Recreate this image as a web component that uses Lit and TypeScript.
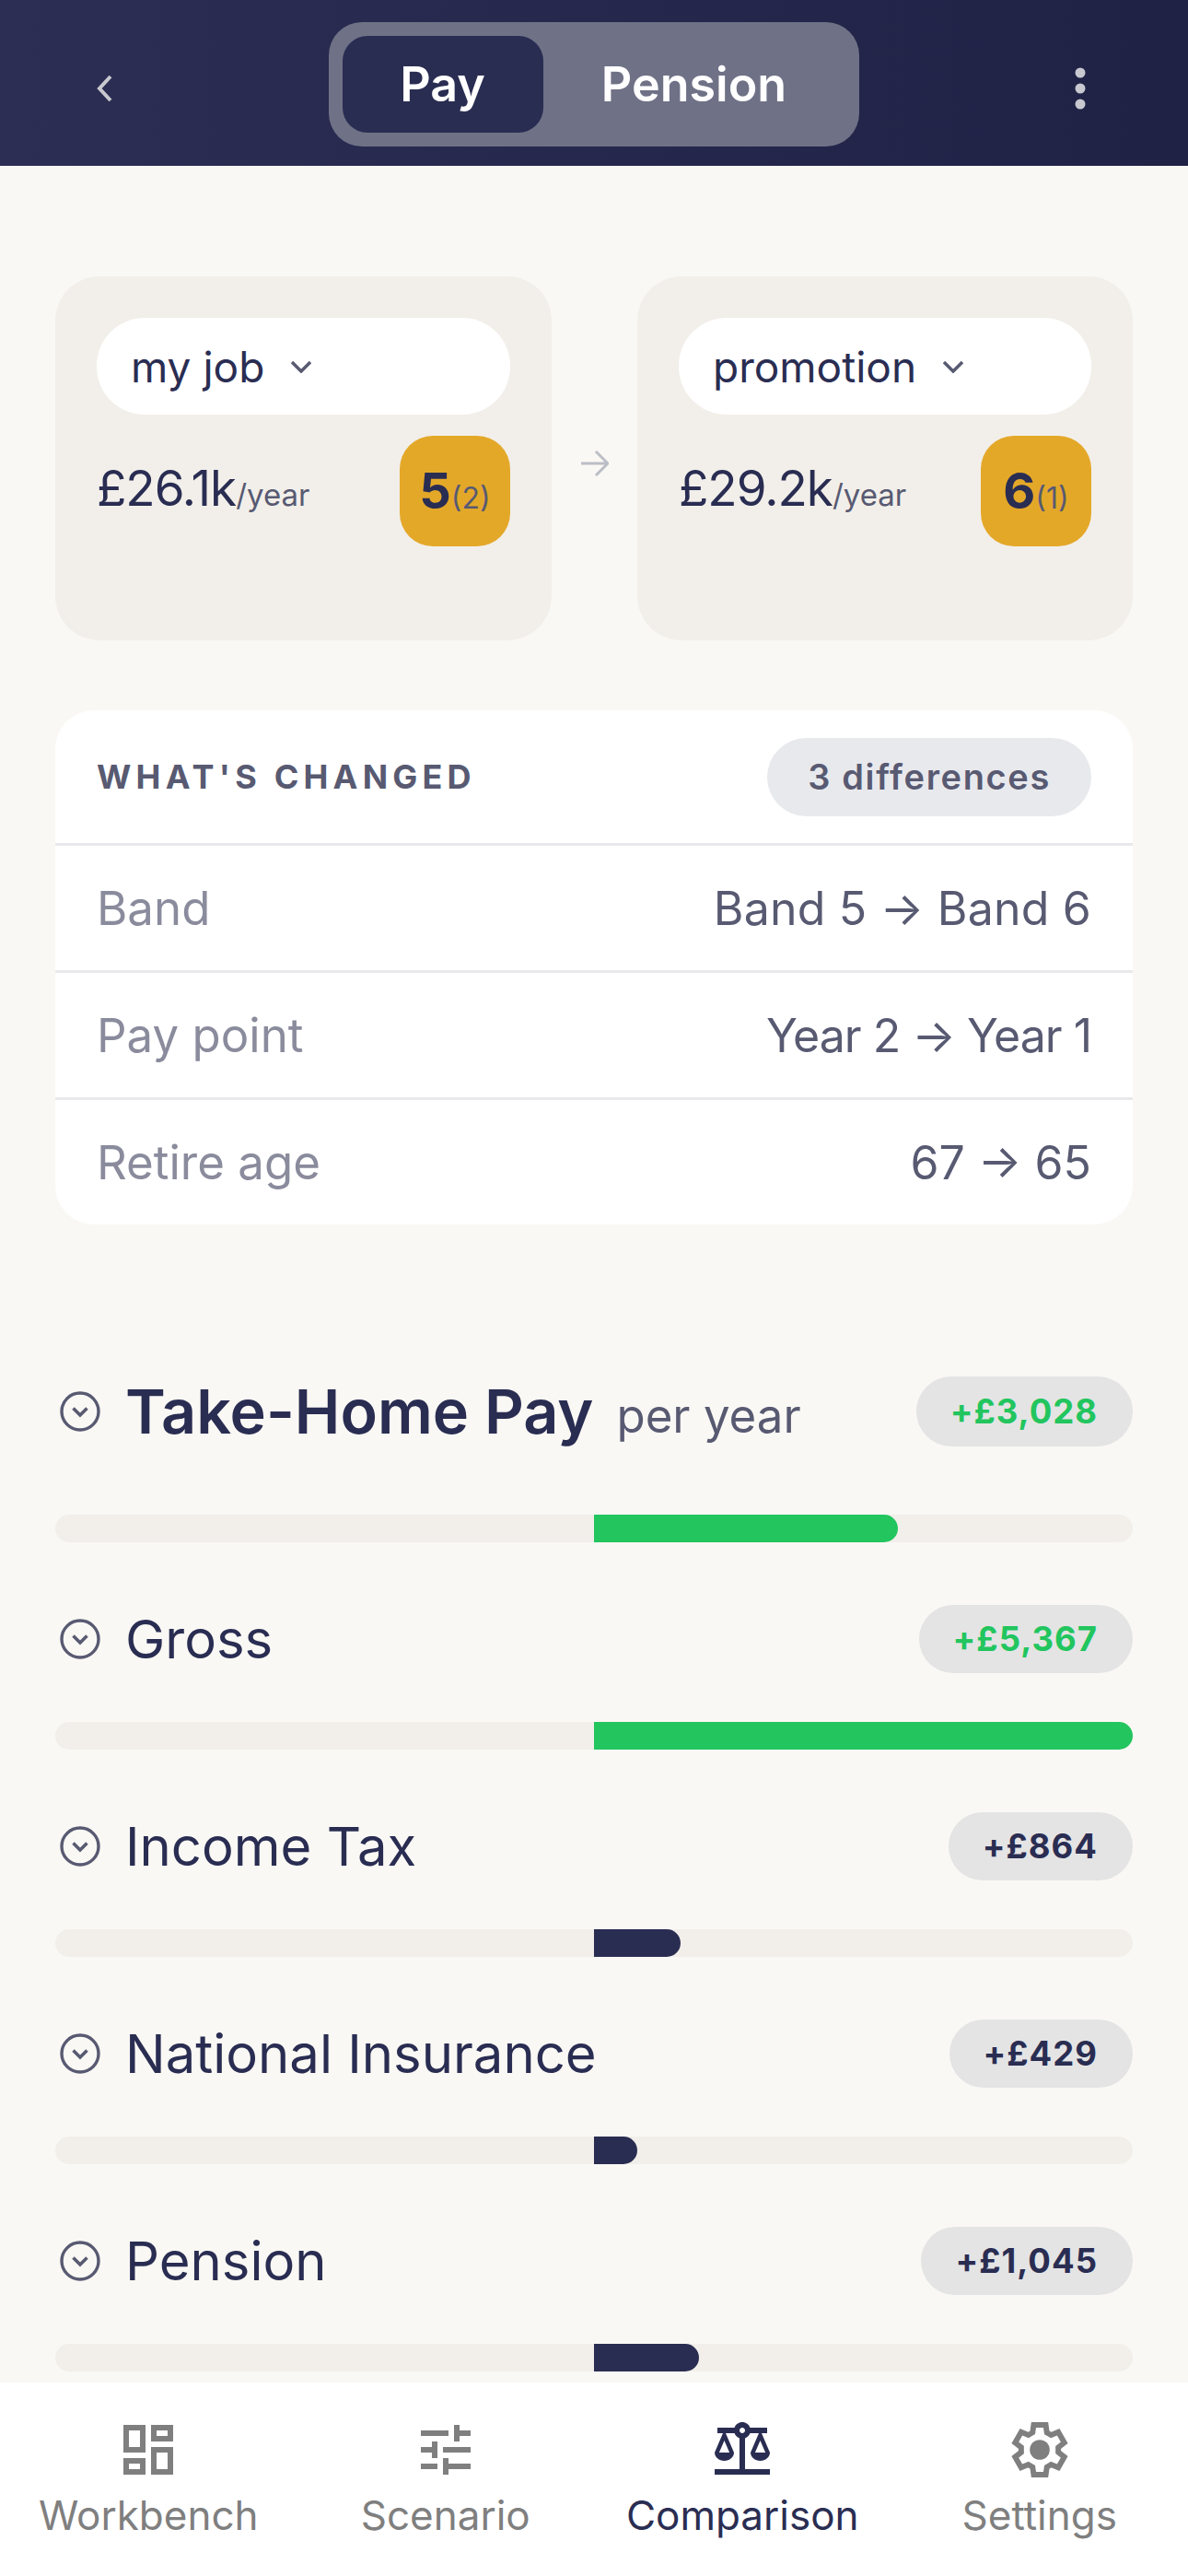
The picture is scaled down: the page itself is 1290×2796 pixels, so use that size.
import { LitElement, html, css, svg } from "lit";
import { customElement } from "lit/decorators.js";

const chevronCircle = html`<svg class="toggle" viewBox="0 0 44 44" fill="none" stroke="#585a72" stroke-width="3.4">
  <circle cx="22" cy="22" r="20"></circle>
  <path d="M14.500 18.500l7.500 7.500 7.500-7.500" stroke-width="3.6"></path>
</svg>`;

const workbench = svg`<path d="M19 5v2h-4V5h4M9 5v6H5V5h4m10 8v6h-4v-6h4M9 17v2H5v-2h4M21 3h-8v6h8V3zM11 3H3v10h8V3zm10 8h-8v10h8V11zm-10 4H3v6h8v-6z"/>`;
const sliders = svg`<path d="M3 17v2h6v-2H3zM3 5v2h10V5H3zm10 16v-2h8v-2h-8v-2h-2v6h2zM7 9v2H3v2h4v2h2V9H7zm14 4v-2H11v2h10zm-6-4h2V7h4V5h-4V3h-2v6z"/>`;
const scales = svg`<path d="M13 7.830c.85-.3 1.530-.98 1.830-1.830H18l-3 7c0 1.660 1.570 3 3.500 3s3.500-1.340 3.500-3l-3-7h2V4h-6.170c-.41-1.170-1.520-2-2.830-2s-2.420.83-2.830 2H3v2h2l-3 7c0 1.660 1.570 3 3.500 3S9 14.660 9 13L6 6h3.170c.3.850.98 1.530 1.830 1.830V19H2v2h20v-2h-9V7.830zM20.370 13h-3.740l1.870-4.360L20.370 13zm-13 0H3.630L5.500 8.640 7.370 13zM12 6c-.55 0-1-.45-1-1 0-.55.45-1 1-1s1 .45 1 1c0 .55-.45 1-1 1z"/>`;
const gear = svg`<polygon fill="none" stroke="currentColor" stroke-width="2.2" transform="translate(12 12) scale(.9) translate(-12 -12)"
    points="9.570,2 14.430,2 14.870,5.070 16.600,6.060 19.470,4.900 21.890,9.120 19.450,11.040 19.450,12.990 21.890,14.900 19.460,19.100 16.580,17.950 14.870,18.950 14.430,22 9.570,22 9.130,18.950 7.400,17.950 4.520,19.100 2.090,14.900 4.550,12.990 4.550,11.010 2.110,9.120 4.550,4.900 7.430,6.070 9.130,5.070"></polygon>
  <circle cx="12" cy="12" r="3.600"></circle>`;

const rows = [
  { name: "Gross", delta: "+£5,367", width: 585, color: "#22c55e" },
  { name: "Income Tax", delta: "+£864", width: 94, color: "#2a2d52" },
  { name: "National Insurance", delta: "+£429", width: 47, color: "#2a2d52" },
  { name: "Pension", delta: "+£1,045", width: 114, color: "#2a2d52" },
];

const changes = [
  { key: "Band", value: "Band 5 → Band 6", spacing: 0.2 },
  { key: "Pay point", value: "Year 2 → Year 1", spacing: -1 },
  { key: "Retire age", value: "67 → 65", spacing: 0 },
];

const navItems = [
  { label: "Workbench", icon: workbench, active: false },
  { label: "Scenario", icon: sliders, active: false },
  { label: "Comparison", icon: scales, active: true },
  { label: "Settings", icon: gear, active: false },
];

@customElement("app-root")
export class AppRoot extends LitElement {
  static styles = css`
    :host {
      display: block;
      width: 1290px;
      height: 2796px;
      font-family: Inter, "Noto Sans", sans-serif;
      color: #2a2d52;
      background: #faf8f4;
      overflow: hidden;
    }
    .screen {
      height: 2796px;
      display: flex;
      flex-direction: column;
    }
    header {
      flex: none;
      height: 180px;
      box-sizing: border-box;
      display: flex;
      align-items: center;
      justify-content: space-between;
      padding: 0 110px 0 103px;
      background: linear-gradient(90deg, #2c2e54, #1f2145);
    }
    .back { width: 20px; height: 34px; margin-top: 12px; }
    .more { width: 14px; height: 46px; margin-top: 12px; }
    .tabs {
      display: flex;
      width: 576px;
      height: 135px;
      margin-top: 3px;
      padding: 15px;
      box-sizing: border-box;
      border-radius: 36px;
      background: #6f7186;
      color: #fff;
      font-weight: 600;
      font-size: 52px;
    }
    .tabs span {
      display: flex;
      align-items: center;
      justify-content: center;
    }
    .tabs .on {
      width: 218px;
      background: #2a2d52;
      border-radius: 27px;
    }
    .tabs .off { width: 328px; }
    main {
      flex: 1;
      min-height: 0;
      overflow: hidden;
      padding: 120px 60px 0;
    }
    .compare {
      display: grid;
      grid-template-columns: 539px 1fr 538px;
      align-items: start;
    }
    .job {
      height: 395px;
      box-sizing: border-box;
      padding: 45px;
      background: #f2efea;
      border-radius: 48px;
    }
    .select {
      height: 105px;
      display: flex;
      align-items: center;
      gap: 28px;
      padding-left: 37px;
      background: #fff;
      border-radius: 52px;
      font-size: 46px;
    }
    .select svg { width: 24px; height: 14px; }
    .figures {
      display: flex;
      align-items: center;
      justify-content: space-between;
      margin-top: 23px;
    }
    .amount { font-size: 53px; letter-spacing: -1px; margin-top: -6px; }
    .amount small { font-size: 33px; color: #585a72; letter-spacing: 0; }
    .band {
      width: 120px;
      height: 120px;
      display: flex;
      align-items: baseline;
      justify-content: center;
      padding-top: 27px;
      box-sizing: border-box;
      background: #e4a829;
      border-radius: 36px;
      font-weight: 700;
      font-size: 54px;
    }
    .band small { font-weight: 400; font-size: 32px; color: #585a72; }
    .arrow {
      justify-self: center;
      width: 30px;
      height: 30px;
      margin-top: 188px;
    }
    .changes {
      margin-top: 76px;
      background: #fff;
      border-radius: 42px;
      overflow: hidden;
    }
    .changes-head {
      height: 144px;
      display: flex;
      align-items: center;
      justify-content: space-between;
      padding: 0 45px;
    }
    .changes-head b {
      font-weight: 700;
      font-size: 36px;
      letter-spacing: 5.200px;
      color: #585a72;
    }
    .count {
      height: 85px;
      display: flex;
      align-items: center;
      padding: 0 44px;
      background: #e8e9ed;
      border-radius: 43px;
      font-weight: 600;
      font-size: 38px;
      letter-spacing: 1.650px;
      color: #585a72;
    }
    .change {
      height: 138px;
      box-sizing: border-box;
      display: flex;
      align-items: center;
      justify-content: space-between;
      padding: 0 45px;
      border-top: 3px solid #e9e9ec;
      font-size: 50px;
      color: #585a72;
    }
    .change .key { color: #8a8b9c; font-size: 51px; }
    .lines { padding-top: 165px; }
    .line {
      display: grid;
      grid-template-columns: 1fr auto;
      align-items: center;
    }
    .title {
      display: flex;
      align-items: center;
      gap: 28px;
      padding-left: 5px;
      font-size: 58px;
      line-height: 1;
    }
    .toggle { width: 44px; height: 44px; flex: none; }
    .title-text { margin-left: -1px; }
    .total .title { font-size: 66.500px; font-weight: 600; }
    .total .title small {
      font-size: 51px;
      font-weight: 400;
      color: #585a72;
      margin-left: -3px;
      padding-top: 8px;
    }
    .delta {
      height: 74px;
      display: flex;
      align-items: center;
      padding: 0 38px 0 37px;
      background: #e4e4e5;
      border-radius: 38px;
      font-weight: 700;
      font-size: 36.500px;
      letter-spacing: 1px;
    }
    .total .delta { height: 76px; }
    .track {
      position: relative;
      height: 30px;
      margin: 53px 0 68px;
      background: #f2efea;
      border-radius: 15px;
    }
    .total + .track { margin-top: 74px; }
    .fill {
      position: absolute;
      left: 585px;
      top: 0;
      bottom: 0;
      border-radius: 0 15px 15px 0;
    }
    nav {
      flex: none;
      height: 210px;
      display: grid;
      grid-template-columns: repeat(4, 322.500px);
      background: #fff;
      color: #7f7f7f;
    }
    nav a {
      display: flex;
      flex-direction: column;
      align-items: center;
      padding-top: 37px;
      font-size: 44px;
    }
    nav svg { width: 72px; height: 72px; fill: currentColor; margin-bottom: 8px; }
    nav a.on { color: #2a2d52; }
  `;

  private renderJob(name: string, amount: string, band: string, point: string) {
    return html`<section class="job">
      <div class="select">
        ${name}
        <svg viewBox="0 0 24 14" fill="none" stroke="#585a72" stroke-width="3.500"><path d="M2 2l10 10 10-10"></path></svg>
      </div>
      <div class="figures">
        <span class="amount">${amount}<small>/year</small></span>
        <span class="band">${band}<small>(${point})</small></span>
      </div>
    </section>`;
  }

  private renderLine(r: (typeof rows)[number]) {
    return html`<div class="line">
        <div class="title">${chevronCircle}<span class="title-text">${r.name}</span></div>
        <div class="delta" style="color: ${r.color}">${r.delta}</div>
      </div>
      <div class="track">
        <div class="fill" style="width: ${r.width}px; background: ${r.color}"></div>
      </div>`;
  }

  render() {
    return html`<div class="screen">
      <header>
        <svg class="back" viewBox="0 0 20 34" fill="none" stroke="#c8c9d0" stroke-width="4"><path d="M17 4L5 17l12 13"></path></svg>
        <div class="tabs"><span class="on">Pay</span><span class="off">Pension</span></div>
        <svg class="more" viewBox="0 0 14 46" fill="#c8c9d0"><circle cx="7" cy="6" r="5.500"></circle><circle cx="7" cy="23" r="5.500"></circle><circle cx="7" cy="40" r="5.500"></circle></svg>
      </header>
      <main>
        <div class="compare">
          ${this.renderJob("my job", "£26.1k", "5", "2")}
          <svg class="arrow" viewBox="0 0 30 30" fill="none" stroke="#bcbec6" stroke-width="3"><path d="M0 15h28M16 2l13 13-13 13"></path></svg>
          ${this.renderJob("promotion", "£29.2k", "6", "1")}
        </div>
        <div class="changes">
          <div class="changes-head"><b>WHAT'S CHANGED</b><span class="count">3 differences</span></div>
          ${changes.map(
            (c) => html`<div class="change">
              <span class="key">${c.key}</span>
              <span style="letter-spacing: ${c.spacing}px">${c.value}</span>
            </div>`,
          )}
        </div>
        <div class="lines">
          <div class="line total">
            <div class="title">${chevronCircle}<span class="title-text">Take-Home Pay</span> <small>per year</small></div>
            <div class="delta" style="color: #22c55e">+£3,028</div>
          </div>
          <div class="track">
            <div class="fill" style="width: 330px; background: #22c55e"></div>
          </div>
          ${rows.map((r) => this.renderLine(r))}
        </div>
      </main>
      <nav>
        ${navItems.map(
          (n) => html`<a class=${n.active ? "on" : ""}>
            <svg viewBox="0 0 24 24">${n.icon}</svg>
            ${n.label}
          </a>`,
        )}
      </nav>
    </div>`;
  }
}
